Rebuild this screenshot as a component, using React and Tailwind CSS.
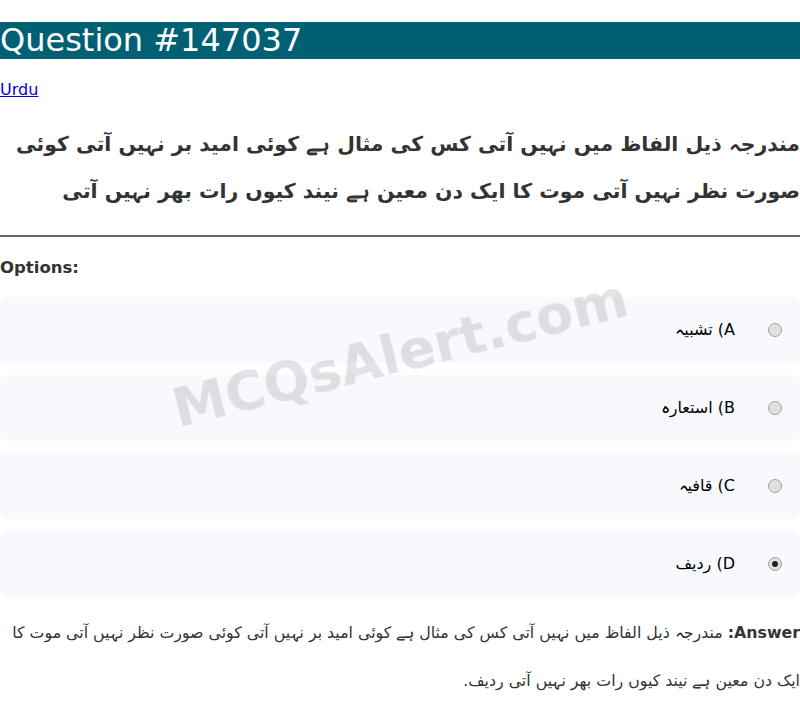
export default function App() {
  const question =
    'مندرجہ ذیل الفاظ میں نہیں آتی کس کی مثال ہے کوئی امید بر نہیں آتی کوئی صورت نظر نہیں آتی موت کا ایک دن معین ہے نیند کیوں رات بھر نہیں آتی';
  const options = [
    { key: 'A', label: 'تشبیہ' },
    { key: 'B', label: 'استعارہ' },
    { key: 'C', label: 'قافیہ' },
    { key: 'D', label: 'ردیف', checked: true },
  ];

  return (
    <div className="min-h-screen bg-white text-[#333] font-['DejaVu_Sans',sans-serif]">
      <h1 className="mt-[22px] mb-[21px] bg-[#006073] text-white text-[32px] leading-[37px] font-normal">
        Question #147037
      </h1>

      <a href="#" className="text-[16px] text-[#0000ee] underline leading-[19px] block">
        Urdu
      </a>

      {/* question body, right-to-left */}
      <p dir="rtl" className="mt-[22px] text-[20.4px] font-bold leading-[47px]">
        {question}
      </p>

      <hr className="mt-[20px] border-t-2 border-[#666]" />

      <p className="mt-[20px] text-[16.5px] font-bold leading-[21px]">Options:</p>

      <div className="mt-[19px] flex flex-col gap-[12px]">
        {options.map((o) => (
          <label
            key={o.key}
            dir="rtl"
            className="h-[66px] rounded-lg bg-[#f8f9fc] flex items-center pr-[18px]"
          >
            <span className="w-[14px] h-[14px] rounded-full border border-[#a0a0a0] bg-[#e0e0e0] flex items-center justify-center">
              {o.checked && <span className="w-[6px] h-[6px] rounded-full bg-[#222]" />}
            </span>
            <span className="mr-[33px] text-[16px] text-black">
              {o.key}) {o.label}
            </span>
          </label>
        ))}
      </div>

      <p dir="rtl" className="mt-[12px] text-[15.8px] leading-[48px]">
        <b className="font-bold">Answer:</b> {question} ردیف.
      </p>

      {/* watermark */}
      <div className="fixed left-1/2 top-1/2 -translate-x-1/2 -translate-y-1/2 -rotate-[14deg] pointer-events-none select-none whitespace-nowrap text-[54px] font-bold text-[rgba(128,128,135,0.22)]">
        MCQsAlert.com
      </div>
    </div>
  );
}
